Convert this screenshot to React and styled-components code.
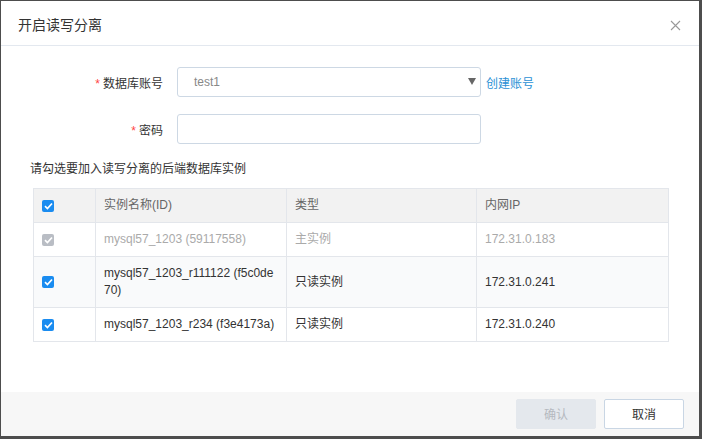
import React from 'react'
import styled, { createGlobalStyle } from 'styled-components'

const Global = createGlobalStyle`
    html, body {
        margin: 0;
        padding: 0;
        background: #4d4d4d;
    }
    body {
        font-family: "Liberation Sans", Arial, "Noto Sans CJK SC", sans-serif;
        font-size: 12px;
        color: #333;
    }
`

const Shell = styled.div`
    width: 702px;
    height: 439px;
    padding: 1px 3px 3px 1px;
    box-sizing: border-box;
    background: #4d4d4d;
`

const Dialog = styled.div`
    width: 698px;
    height: 435px;
    background: #fff;
    display: flex;
    flex-direction: column;
`

const Header = styled.div`
    height: 44px;
    border-bottom: 1px solid #e3e8ef;
    display: flex;
    align-items: center;
    justify-content: space-between;
    padding: 0 17px 0 17px;
    flex-shrink: 0;
`

const Title = styled.div`
    font-size: 14px;
    color: #333;
    margin-top: 2px;
`

const Close = styled.span`
    width: 12px;
    height: 12px;
    margin-top: 6px;
    display: flex;
`

const Body = styled.div`
    flex: 1;
    padding: 21px 0 0 32px;
`

const FormRow = styled.div`
    display: flex;
    align-items: center;
    height: 30px;
    margin-bottom: ${p => p.gap || 0}px;
`

const Label = styled.label`
    width: 130px;
    text-align: right;
    margin-right: 14px;
    font-size: 12px;
    color: #333;
`

const Star = styled.span`
    color: #f44;
    margin-right: 3px;
`

const Field = styled.div`
    position: relative;
    width: 304px;
    height: 30px;
    box-sizing: border-box;
    border: 1px solid #cdd8e4;
    border-radius: 3px;
    display: flex;
    align-items: center;
    padding-left: 16px;
    color: #888;
    font-size: 12px;
`

const Arrow = styled.span`
    position: absolute;
    right: 4px;
    top: 10px;
    width: 0;
    height: 0;
    border-left: 4px solid transparent;
    border-right: 4px solid transparent;
    border-top: 7px solid #666;
`

const Link = styled.a`
    margin-left: 5px;
    color: #2b91d5;
    font-size: 12px;
    text-decoration: none;
`

const Hint = styled.div`
    margin-top: 17px;
    margin-left: -3px;
    font-size: 12px;
    color: #333;
    line-height: 16px;
`

const Table = styled.div`
    margin-top: 11px;
    width: 636px;
    border: 1px solid #e3e6eb;
    box-sizing: border-box;
    display: grid;
    grid-template-columns: 61px 191px 190px 192px;
`

const Cell = styled.div`
    display: flex;
    align-items: center;
    padding: 0 8px;
    box-sizing: border-box;
    min-height: ${p => (p.head ? 33 : 34)}px;
    background: ${p => (p.head ? '#f2f2f2' : p.shade ? '#f9fafb' : '#fff')};
    color: ${p => (p.head ? '#666' : p.muted ? '#aaa' : '#333')};
    border-top: ${p => (p.head ? 'none' : '1px solid #e3e6eb')};
    border-left: ${p => (p.first ? 'none' : '1px solid #e3e6eb')};
    line-height: 17px;
    font-size: 12px;
    padding-top: ${p => (p.tall ? 8 : 0)}px;
    padding-bottom: ${p => (p.tall ? 8 : 0)}px;
`

const Box = styled.span`
    width: 12px;
    height: 12px;
    border-radius: 2px;
    background: ${p => (p.disabled ? '#b9bdc4' : '#1a8cf0')};
    display: flex;
    align-items: center;
    justify-content: center;
`

const Footer = styled.div`
    height: 44px;
    background: #f7f7f7;
    display: flex;
    align-items: center;
    justify-content: flex-end;
    gap: 8px;
    padding-right: 15px;
    flex-shrink: 0;
`

const Button = styled.button`
    width: 80px;
    height: 30px;
    margin-top: -1px;
    border-radius: 2px;
    font-family: inherit;
    font-size: 12px;
    border: 1px solid ${p => (p.primary ? '#e4e8ed' : '#c9d6e4')};
    background: ${p => (p.primary ? '#e4e8ed' : '#fff')};
    color: ${p => (p.primary ? '#b5b9bf' : '#333')};
`

const Check = ({ disabled }) => (
    <Box disabled={disabled}>
        <svg width="9" height="8" viewBox="0 0 9 8">
            <path d="M1 4.2 L3.4 6.5 L8 1.5" fill="none" stroke="#fff" strokeWidth="1.7" />
        </svg>
    </Box>
)

const rows = [
    { name: 'mysql57_1203 (59117558)', type: '主实例', ip: '172.31.0.183', muted: true },
    { name: 'mysql57_1203_r111122 (f5c0de70)', type: '只读实例', ip: '172.31.0.241', tall: true, shade: true },
    { name: 'mysql57_1203_r234 (f3e4173a)', type: '只读实例', ip: '172.31.0.240' },
]

export default function App() {
    return (
        <Shell>
            <Global />
            <Dialog>
                <Header>
                    <Title>开启读写分离</Title>
                    <Close>
                        <svg width="11" height="11" viewBox="0 0 11 11">
                            <path d="M1 1 L10 10 M10 1 L1 10" stroke="#999" strokeWidth="1.1" />
                        </svg>
                    </Close>
                </Header>
                <Body>
                    <FormRow gap={17}>
                        <Label><Star>*</Star>数据库账号</Label>
                        <Field>
                            test1
                            <Arrow />
                        </Field>
                        <Link href="#">创建账号</Link>
                    </FormRow>
                    <FormRow>
                        <Label><Star>*</Star>密码</Label>
                        <Field />
                    </FormRow>
                    <Hint>请勾选要加入读写分离的后端数据库实例</Hint>
                    <Table>
                        <Cell head first><Check /></Cell>
                        <Cell head>实例名称(ID)</Cell>
                        <Cell head>类型</Cell>
                        <Cell head>内网IP</Cell>
                        {rows.map(r => (
                            <React.Fragment key={r.name}>
                                <Cell first shade={r.shade} tall={r.tall}><Check disabled={r.muted} /></Cell>
                                <Cell shade={r.shade} muted={r.muted} tall={r.tall}>
                                    <span style={{ width: r.tall ? 174 : 'auto', wordBreak: 'break-all' }}>{r.name}</span>
                                </Cell>
                                <Cell shade={r.shade} muted={r.muted} tall={r.tall}>{r.type}</Cell>
                                <Cell shade={r.shade} muted={r.muted} tall={r.tall}>{r.ip}</Cell>
                            </React.Fragment>
                        ))}
                    </Table>
                </Body>
                <Footer>
                    <Button primary>确认</Button>
                    <Button>取消</Button>
                </Footer>
            </Dialog>
        </Shell>
    )
}
